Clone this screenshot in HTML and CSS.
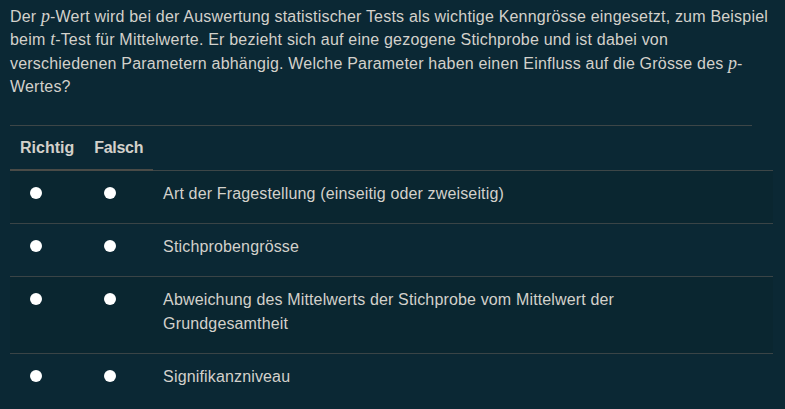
FILE: index.html
```html
<!DOCTYPE html>
<html lang="de">
<head>
<meta charset="utf-8">
<link rel="stylesheet" href="styles.css">
</head>
<body>
<div class="question">
  <p class="stem">Der <span class="math">p</span>-Wert wird bei der Auswertung statistischer Tests als wichtige Kenngrösse eingesetzt, zum Beispiel<br>beim <span class="math">t</span>-Test für Mittelwerte. Er bezieht sich auf eine gezogene Stichprobe und ist dabei von<br>verschiedenen Parametern abhängig. Welche Parameter haben einen Einfluss auf die Grösse des <span class="math">p</span>-<br>Wertes?</p>
  <hr class="rule">
  <table class="kprim">
    <thead>
      <tr><th>Richtig</th><th class="narrow">Falsch</th><th class="blank"></th></tr>
    </thead>
    <tbody>
      <tr class="odd"><td><input type="radio" name="a"></td><td><input type="radio" name="a"></td><td class="stmt">Art der Fragestellung (einseitig oder zweiseitig)</td></tr>
      <tr><td><input type="radio" name="b"></td><td><input type="radio" name="b"></td><td class="stmt">Stichprobengrösse</td></tr>
      <tr class="odd"><td><input type="radio" name="c"></td><td><input type="radio" name="c"></td><td class="stmt">Abweichung des Mittelwerts der Stichprobe vom Mittelwert der<br>Grundgesamtheit</td></tr>
      <tr><td><input type="radio" name="d"></td><td><input type="radio" name="d"></td><td class="stmt">Signifikanzniveau</td></tr>
    </tbody>
  </table>
</div>
</body>
</html>
```

FILE: styles.css
```css
html, body {
  background: #0b2834;
}
body {
  margin: 0;
  padding: 5px 12px 0 10px;
  font-family: "Liberation Sans", Arial, sans-serif;
  font-size: 16px;
  line-height: 24px;
  color: #d3d1cb;
}
.stem {
  margin: 0;
  line-height: 23.4px;
  letter-spacing: 0.2px;
  white-space: nowrap;
}
.math {
  font-family: "Liberation Serif", "Times New Roman", serif;
  font-style: italic;
  font-size: 18px;
  letter-spacing: 0;
}
.rule {
  width: 742px;
  margin: 26px 0 0 0;
  border: 0;
  border-top: 1px solid #3d4647;
  height: 0;
}
.kprim {
  width: 763px;
  border-collapse: separate;
  border-spacing: 0;
}
.kprim th {
  text-align: left;
  font-weight: bold;
  padding: 10px 10px 9px;
  border-bottom: 2px solid #4a4b47;
  white-space: nowrap;
}
.kprim th.narrow {
  letter-spacing: -0.3px;
}
.kprim th.blank {
  width: 100%;
  border-bottom: 1px solid #3d4647;
}
.kprim td {
  padding: 11px 10px 17px;
  border-bottom: 1px solid #3a4446;
  vertical-align: top;
}
.kprim tr.odd td {
  background: #0a2630;
}
.kprim tbody tr:last-child td {
  border-bottom: 0;
}
.kprim td.stmt {
  padding-left: 10px;
  letter-spacing: 0.15px;
}
.kprim input[type="radio"] {
  appearance: none;
  -webkit-appearance: none;
  width: 12px;
  height: 12px;
  border-radius: 50%;
  background: #ffffff;
  margin: 5px 0 0 10px;
  display: block;
  border: 0;
}
```
